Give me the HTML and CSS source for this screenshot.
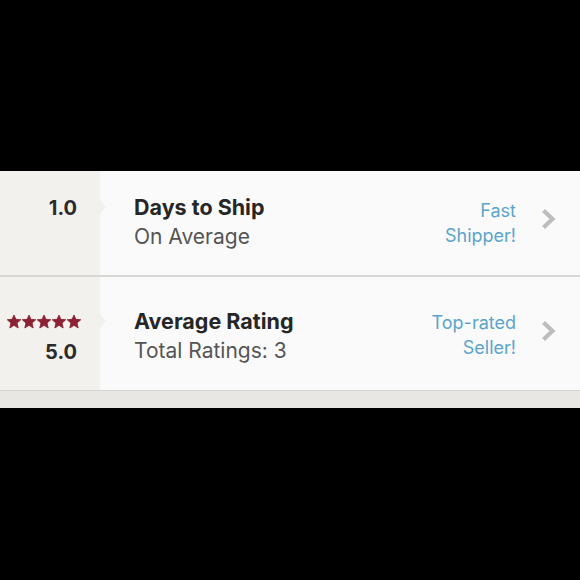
FILE: index.html
```html
<!DOCTYPE html>
<html>
<head>
<meta charset="utf-8">
<link rel="stylesheet" href="styles.css">
</head>
<body>
<div class="screen">
  <div class="panel">
    <div class="row row-ship">
      <div class="stat">
        <div class="stat-value">1.0</div>
      </div>
      <div class="info">
        <div class="labels">
          <div class="title">Days to Ship</div>
          <div class="sub">On Average</div>
        </div>
        <div class="badge">Fast<br>Shipper!</div>
        <svg class="chev" width="17" height="22" viewBox="0 0 17 22"><path d="M2.5 2.5 L11.5 11 L2.5 19.5" fill="none" stroke="#bdbdbd" stroke-width="4.2"/></svg>
      </div>
    </div>
    <div class="row row-rating">
      <div class="stat">
        <div class="stars">
          <svg width="14" height="13" viewBox="0 0 24 23"><path d="M12 0 L15.3 7.6 L24 8.4 L17.4 14.1 L19.4 23 L12 18.3 L4.6 23 L6.6 14.1 L0 8.4 L8.7 7.6 Z" fill="#8a2233" stroke="#8a2233" stroke-width="1.5" stroke-linejoin="round"/></svg>
          <svg width="14" height="13" viewBox="0 0 24 23"><path d="M12 0 L15.3 7.6 L24 8.4 L17.4 14.1 L19.4 23 L12 18.3 L4.6 23 L6.6 14.1 L0 8.4 L8.7 7.6 Z" fill="#8a2233" stroke="#8a2233" stroke-width="1.5" stroke-linejoin="round"/></svg>
          <svg width="14" height="13" viewBox="0 0 24 23"><path d="M12 0 L15.3 7.6 L24 8.4 L17.4 14.1 L19.4 23 L12 18.3 L4.6 23 L6.6 14.1 L0 8.4 L8.7 7.6 Z" fill="#8a2233" stroke="#8a2233" stroke-width="1.5" stroke-linejoin="round"/></svg>
          <svg width="14" height="13" viewBox="0 0 24 23"><path d="M12 0 L15.3 7.6 L24 8.4 L17.4 14.1 L19.4 23 L12 18.3 L4.6 23 L6.6 14.1 L0 8.4 L8.7 7.6 Z" fill="#8a2233" stroke="#8a2233" stroke-width="1.5" stroke-linejoin="round"/></svg>
          <svg width="14" height="13" viewBox="0 0 24 23"><path d="M12 0 L15.3 7.6 L24 8.4 L17.4 14.1 L19.4 23 L12 18.3 L4.6 23 L6.6 14.1 L0 8.4 L8.7 7.6 Z" fill="#8a2233" stroke="#8a2233" stroke-width="1.5" stroke-linejoin="round"/></svg>
        </div>
        <div class="stat-value">5.0</div>
      </div>
      <div class="info">
        <div class="labels">
          <div class="title">Average Rating</div>
          <div class="sub">Total Ratings: 3</div>
        </div>
        <div class="badge">Top-rated<br>Seller!</div>
        <svg class="chev" width="17" height="22" viewBox="0 0 17 22"><path d="M2.5 2.5 L11.5 11 L2.5 19.5" fill="none" stroke="#bdbdbd" stroke-width="4.2"/></svg>
      </div>
    </div>
    <div class="footer-strip"></div>
  </div>
</div>
</body>
</html>
```

FILE: styles.css
```css
html, body {
  margin: 0;
  padding: 0;
  background: #000;
}
.screen {
  width: 580px;
  height: 580px;
  padding-top: 171px;
  box-sizing: border-box;
  background: #000;
  font-family: Inter, "Open Sans", sans-serif;
}
.panel {
  display: flex;
  flex-direction: column;
}
.row {
  display: grid;
  grid-template-columns: 100px 1fr;
  box-sizing: border-box;
  border-bottom: 2px solid #d9d7d5;
}
.row-ship { height: 106px; }
.row-rating { height: 114px; border-bottom: 1px solid #d6d4d0; }
.stat {
  position: relative;
  background: #f3f1ee;
  display: flex;
  flex-direction: column;
  align-items: flex-end;
  padding-right: 23px;
}
.stat::after {
  content: "";
  position: absolute;
  right: -6px;
  width: 0;
  height: 0;
  border-top: 7px solid transparent;
  border-bottom: 7px solid transparent;
  border-left: 6px solid #f3f1ee;
}
.row-ship .stat::after { top: 29px; }
.row-rating .stat::after { top: 37px; }
.row-ship .stat { padding-top: 24px; }
.row-rating .stat { padding-top: 38px; }
.stat-value {
  font-size: 20px;
  font-weight: 700;
  color: #2b2b2b;
  line-height: 26px;
}
.row-rating .stat-value { margin-top: 11px; }
.stars {
  display: flex;
  gap: 1px;
  margin-right: -4px;
  height: 13px;
}
.stars svg { display: block; overflow: visible; }
.info {
  background: #fbfafa;
  display: flex;
  align-items: flex-start;
  padding-left: 34px;
  padding-right: 22px;
}
.row-ship .info { padding-top: 23px; }
.row-rating .info { padding-top: 31px; }
.labels { flex: 1; }
.title {
  font-size: 21.5px;
  font-weight: 700;
  color: #262626;
  line-height: 27px;
}
.sub {
  font-size: 21px;
  color: #555;
  line-height: 32px;
}
.badge {
  text-align: right;
  color: #5aa5c9;
  font-size: 18px;
  line-height: 25px;
  margin-right: 25px;
  margin-top: 4px;
}
.row-rating .badge { margin-top: 2px; }
.chev {
  display: block;
  margin-top: 14px;
}
.row-rating .chev { margin-top: 12px; }
.footer-strip {
  height: 17px;
  background: #e9e7e3;
}
```
